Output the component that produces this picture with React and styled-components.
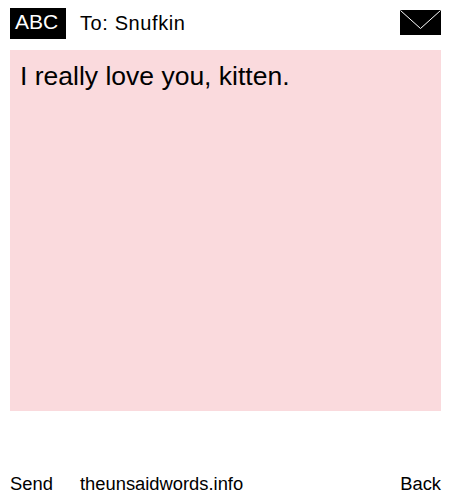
import React from 'react';
import styled, { createGlobalStyle } from 'styled-components';

const Global = createGlobalStyle`
  html, body {
    margin: 0;
    padding: 0;
    background: #fff;
  }
`;

const Page = styled.div`
  width: 450px;
  height: 500px;
  box-sizing: border-box;
  padding: 8px 9px 0 10px;
  display: flex;
  flex-direction: column;
  font-family: 'Liberation Sans', Arial, sans-serif;
  color: #000;
`;

const Header = styled.div`
  height: 31px;
  display: flex;
  align-items: center;
`;

const Badge = styled.div`
  width: 56px;
  height: 31px;
  box-sizing: border-box;
  padding-left: 5px;
  background: #000;
  color: #fff;
  font-size: 21px;
  line-height: 28px;
`;

const Recipient = styled.div`
  margin-left: 14px;
  font-size: 20px;
  letter-spacing: 0.6px;
  line-height: 30px;
  height: 31px;
  flex: 1;
`;

const Envelope = styled.svg`
  display: block;
  width: 41px;
  height: 25px;
  margin-top: -2px;
`;

const Message = styled.div`
  margin-top: 11px;
  height: 361px;
  box-sizing: border-box;
  padding: 10px 10px;
  background: #fadadd;
  font-size: 26.5px;
  line-height: 32px;
`;

const Footer = styled.div`
  margin-top: 61px;
  display: flex;
  font-size: 18.35px;
  line-height: 24px;
`;

const SendLink = styled.div`
  width: 70px;
`;

const SiteLink = styled.div`
  flex: 1;
`;

const App = () => (
  <Page>
    <Global />
    <Header>
      <Badge>ABC</Badge>
      <Recipient>To: Snufkin</Recipient>
      <Envelope viewBox="0 0 41 25">
        <rect width="41" height="25" fill="#000" />
        <path d="M0.5 0.5 L20.5 18.5 L40.5 0.5" fill="none" stroke="#fff" strokeWidth="1" />
      </Envelope>
    </Header>
    <Message>I really love you, kitten.</Message>
    <Footer>
      <SendLink>Send</SendLink>
      <SiteLink>theunsaidwords.info</SiteLink>
      <div>Back</div>
    </Footer>
  </Page>
);

export default App;
